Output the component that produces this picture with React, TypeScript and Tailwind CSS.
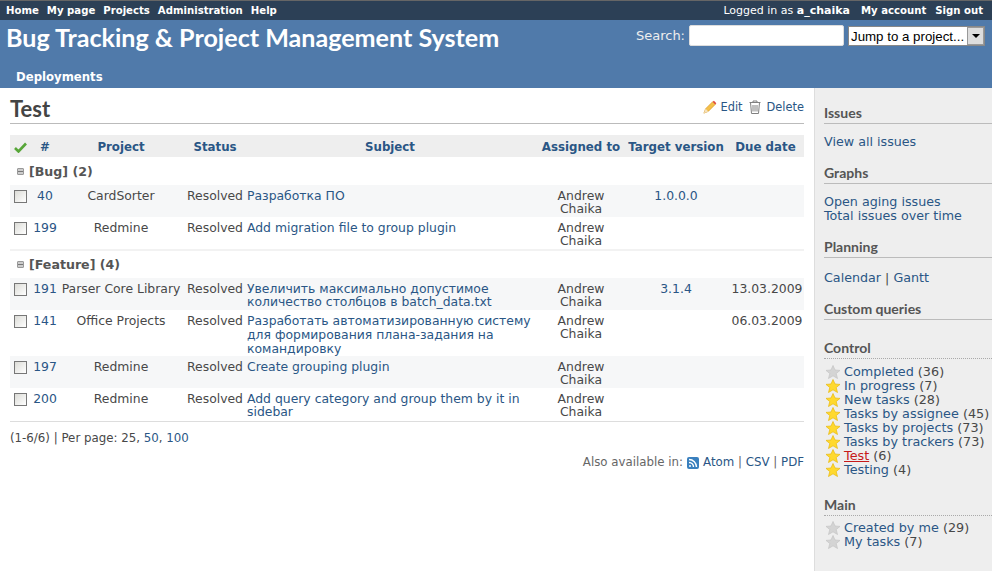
const sans = "font-['DejaVu_Sans',Verdana,sans-serif]";

type Issue = {
  id: number;
  project: string;
  subject: string;
  version?: string;
  due?: string;
  odd: boolean;
  tall?: boolean;
};

const bugs: Issue[] = [
  { id: 40, project: "CardSorter", subject: "Разработка ПО", version: "1.0.0.0", odd: true },
  { id: 199, project: "Redmine", subject: "Add migration file to group plugin", odd: false },
];

const features: Issue[] = [
  { id: 191, project: "Parser Core Library", subject: "Увеличить максимально допустимое количество столбцов в batch_data.txt", version: "3.1.4", due: "13.03.2009", odd: true },
  { id: 141, project: "Office Projects", subject: "Разработать автоматизированную систему для формирования плана-задания на командировку", due: "06.03.2009", odd: false, tall: true },
  { id: 197, project: "Redmine", subject: "Create grouping plugin", odd: true },
  { id: 200, project: "Redmine", subject: "Add query category and group them by it in sidebar", odd: false },
];

function Star({ on }: { on: boolean }) {
  return (
    <svg width="16" height="14" viewBox="0 0 16 14" className="shrink-0">
      <path
        d="M8 0.5 L10 5 L15 5.4 L11.2 8.5 L12.5 13.5 L8 10.8 L3.5 13.5 L4.8 8.5 L1 5.4 L6 5 Z"
        fill={on ? "#FFD92E" : "#D4D4D4"}
        stroke={on ? "#E8B90C" : "#C4C4C4"}
        strokeWidth="0.7"
      />
    </svg>
  );
}

function Query({ name, count, on = true, active = false }: { name: string; count: number; on?: boolean; active?: boolean }) {
  return (
    <div className="flex h-[14px] items-center gap-[3px] pl-[1px] whitespace-nowrap text-[12.8px] text-[#484848]">
      <Star on={on} />
      <span>
        <a className={active ? "text-[#C61A1A] underline" : "text-[#2A5685]"}>{name}</a> ({count})
      </span>
    </div>
  );
}

function SideTitle({ children, dotted = false }: { children: string; dotted?: boolean }) {
  return (
    <h3 className={`font-['Lato',sans-serif] pb-[2px] text-[14px] leading-[16px] font-bold text-[#555] border-b ${dotted ? "border-dotted border-[#aaa]" : "border-[#bbb]"}`}>
      {children}
    </h3>
  );
}

function Row({ issue }: { issue: Issue }) {
  return (
    <tr className={`align-top ${issue.odd ? "bg-[#F6F7F8]" : "bg-white"}`}>
      <td className="pt-[5px] pl-[4px]">
        <span className="block h-[13px] w-[13px] border border-[#777] bg-gradient-to-br from-[#dcdcd7] to-white" />
      </td>
      <td className="pt-[4px] pb-[2px] text-center text-[#2A5685]">{issue.id}</td>
      <td className="pt-[4px] pb-[2px] text-center whitespace-nowrap">{issue.project}</td>
      <td className="pt-[4px] pb-[2px] text-center">Resolved</td>
      <td className={`pt-[4px] px-[1px] text-[#2A5685] ${issue.tall ? "leading-[14px]" : "pb-[2px]"}`}>{issue.subject}</td>
      <td className="pt-[4px] pb-[2px] text-center">Andrew<br />Chaika</td>
      <td className="pt-[4px] pb-[2px] text-center text-[#2A5685]">{issue.version}</td>
      <td className="pt-[4px] pb-[2px] text-center">{issue.due}</td>
    </tr>
  );
}

function GroupRow({ name, count, top = false }: { name: string; count: number; top?: boolean }) {
  return (
    <tr className={top ? "border-t-2 border-[#f2f2f2]" : ""}>
      <td colSpan={8} className="h-[28px] pl-[7px] align-middle">
        <span className="flex items-center gap-[5px] text-[12.6px] font-bold text-[#555]">
          <span className="flex h-[7px] w-[7px] items-center justify-center rounded-[1px] border border-[#999] bg-[#ccc]">
            <span className="h-[1px] w-[5px] bg-[#777]" />
          </span>
          [{name}] ({count})
        </span>
      </td>
    </tr>
  );
}

export default function App() {
  return (
    <div className={`${sans} flex h-[571px] w-[992px] flex-col overflow-hidden bg-white text-[12.4px] leading-[13px] text-[#484848]`}>
      <div className="flex h-[20px] items-center justify-between border-t border-t-[#666] bg-[#2C4056] px-[6px] pb-[1px] text-[10.15px] font-bold text-white">
        <div className="flex gap-[8px]">
          <a>Home</a>
          <a>My page</a>
          <a>Projects</a>
          <a>Administration</a>
          <a>Help</a>
        </div>
        <div className="flex items-center gap-[11px] pr-[3px]">
          <span className="text-[11px] font-normal">Logged in as <b>a_chaika</b></span>
          <div className="flex gap-[9px]">
            <a>My account</a>
            <a>Sign out</a>
          </div>
        </div>
      </div>

      <div className="flex h-[68px] flex-col bg-[#507AAA] text-white">
        <div className="flex justify-between">
          <h1 className="pt-[3px] pl-[6px] font-['Lato',sans-serif] text-[25.1px] leading-[28px] font-bold whitespace-nowrap">
            Bug Tracking &amp; Project Management System
          </h1>
          <div className="flex items-start gap-[4px] pt-[5px] pr-[7px]">
            <span className="pt-[3px] text-[13px] leading-[15px] text-[#eee]">Search:</span>
            <input className="h-[21px] w-[155px] rounded-[2px] border border-[#ddd] bg-white" />
            <div className="mt-[1px] flex h-[20px] w-[137px] items-center border border-[#888] bg-white pl-[2px] font-['Liberation_Sans',sans-serif] text-[13.3px] text-black">
              <span className="flex-1 whitespace-nowrap">Jump to a project...</span>
              <span className="flex h-[18px] w-[17px] items-center justify-center border border-[#999] bg-[#ddd]">
                <span className="border-x-[4px] border-t-[4px] border-x-transparent border-t-black" />
              </span>
            </div>
          </div>
        </div>
        <a className="mt-auto pb-[3px] pl-[16px] text-[11.7px] leading-[15px] font-bold">Deployments</a>
      </div>

      <div className="flex min-h-0 flex-1">
        <main className="w-[814px] shrink-0 px-[10px] pt-[8px]">
          <div className="flex h-[28px] items-start justify-between border-b border-[#bbb]">
            <h2 className="pt-[1px] font-['Lato',sans-serif] text-[22px] leading-[24px] font-bold text-[#444]">Test</h2>
            <div className="flex items-center pt-[4px] text-[11.4px] text-[#2A5685]">
              <svg width="14" height="14" viewBox="0 0 16 16">
                <path d="M1 15 L3 10 L11 2 L14 5 L6 13 Z" fill="#F5C04A" stroke="#D99A2B" strokeWidth="0.8" />
                <path d="M11 2 L12.5 0.8 L15.2 3.6 L14 5 Z" fill="#E0483A" />
                <path d="M1 15 L3 10 L6 13 Z" fill="#F4E2BE" />
              </svg>
              <a className="ml-[4px]">Edit</a>
              <svg width="12" height="14" viewBox="0 0 12 14" fill="none" stroke="#808080" strokeWidth="1" className="ml-[6px]">
                <path d="M0.5 2.5 H11.5 M4 2.5 V1 H8 V2.5 M1.5 2.5 L2.5 13.5 H9.5 L10.5 2.5 M4 5 V11.5 M6 5 V11.5 M8 5 V11.5" />
              </svg>
              <a className="ml-[6px]">Delete</a>
            </div>
          </div>

          <table className="mt-[11px] w-[794px] table-fixed border-collapse border-b border-[#ddd]">
            <colgroup>
              <col className="w-[22px]" />
              <col className="w-[26px]" />
              <col className="w-[126px]" />
              <col className="w-[62px]" />
              <col className="w-[294px]" />
              <col className="w-[82px]" />
              <col className="w-[108px]" />
              <col className="w-[74px]" />
            </colgroup>
            <thead>
              <tr className="h-[22px] bg-[#EEEEEE] text-[11.8px] font-bold text-[#2A5685] [&>th]:pt-[2px]">
                <th className="pl-[4px] text-left">
                  <svg width="13" height="11" viewBox="0 0 13 11">
                    <path d="M1 6 L4.5 9.5 L12 1.5" fill="none" stroke="#57A639" strokeWidth="2.6" />
                  </svg>
                </th>
                <th>#</th>
                <th>Project</th>
                <th>Status</th>
                <th className="pr-[6px]">Subject</th>
                <th className="whitespace-nowrap">Assigned to</th>
                <th className="whitespace-nowrap">Target version</th>
                <th className="pr-[3px] whitespace-nowrap">Due date</th>
              </tr>
            </thead>
            <tbody className="[&>tr:last-child>td]:pb-[3px]">
              <GroupRow name="Bug" count={2} />
              {bugs.map((b) => <Row key={b.id} issue={b} />)}
              <GroupRow name="Feature" count={4} top />
              {features.map((f) => <Row key={f.id} issue={f} />)}
            </tbody>
          </table>

          <p className="mt-[10px] text-[11.8px]">
            (1-6/6) | Per page: 25, <a className="text-[#2A5685]">50</a>, <a className="text-[#2A5685]">100</a>
          </p>
          <p className="mt-[11px] flex items-center justify-end gap-[4px] text-[11.8px] text-[#666]">
            Also available in:
            <span className="flex h-[12px] w-[12px] items-center justify-center rounded-[2px] bg-[#3A80BE]">
              <svg width="10" height="10" viewBox="0 0 10 10" fill="none" stroke="white" strokeWidth="1.4">
                <circle cx="2" cy="8" r="1" fill="white" stroke="none" />
                <path d="M1 4.5 A4.5 4.5 0 0 1 5.5 9 M1 1.5 A7.5 7.5 0 0 1 8.5 9" />
              </svg>
            </span>
            <span><a className="text-[#2A5685]">Atom</a> | <a className="text-[#2A5685]">CSV</a> | <a className="text-[#2A5685]">PDF</a></span>
          </p>
        </main>

        <aside className="flex-1 border-l border-[#ddd] bg-[#EEEEEE] pt-[17px] pl-[9px] text-[12.7px] leading-[14px]">
          <SideTitle>Issues</SideTitle>
          <p className="mt-[11px] text-[#2A5685]">View all issues</p>
          <div className="mt-[16px]"><SideTitle>Graphs</SideTitle></div>
          <p className="mt-[11px] text-[#2A5685]">Open aging issues<br />Total issues over time</p>
          <div className="mt-[16px]"><SideTitle>Planning</SideTitle></div>
          <p className="mt-[13px] text-[#2A5685]">Calendar <span className="text-[#484848]">|</span> Gantt</p>
          <div className="mt-[16px]"><SideTitle>Custom queries</SideTitle></div>
          <div className="mt-[20px]"><SideTitle dotted>Control</SideTitle></div>
          <div className="mt-[6px]">
            <Query name="Completed" count={36} on={false} />
            <Query name="In progress" count={7} />
            <Query name="New tasks" count={28} />
            <Query name="Tasks by assignee" count={45} />
            <Query name="Tasks by projects" count={73} />
            <Query name="Tasks by trackers" count={73} />
            <Query name="Test" count={6} active />
            <Query name="Testing" count={4} />
          </div>
          <div className="mt-[20px]"><SideTitle dotted>Main</SideTitle></div>
          <div className="mt-[5px]">
            <Query name="Created by me" count={29} on={false} />
            <Query name="My tasks" count={7} on={false} />
          </div>
        </aside>
      </div>
    </div>
  );
}
